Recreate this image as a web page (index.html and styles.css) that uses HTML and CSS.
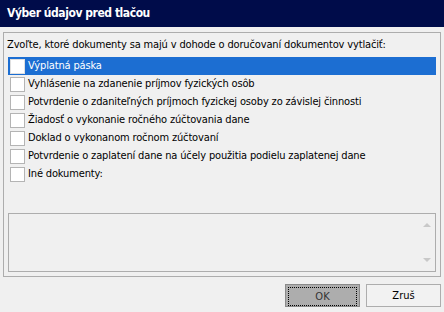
FILE: index.html
```html
<!doctype html>
<html>

<head>
   <meta charset="utf-8">
   <title>Výber údajov pred tlačou</title>
   <link rel="stylesheet" href="styles.css">
</head>

<body>
   <div class="titleBar">Výber údajov pred tlačou</div>

   <div class="panel">
      <div class="prompt">Zvoľte, ktoré dokumenty sa majú v dohode o doručovaní dokumentov vytlačiť:</div>
      <div class="list">
         <div class="row selected"><span class="box"></span>Výplatná páska</div>
         <div class="row"><span class="box"></span>Vyhlásenie na zdanenie príjmov fyzických osôb</div>
         <div class="row"><span class="box"></span>Potvrdenie o zdaniteľných príjmoch fyzickej osoby zo závislej činnosti</div>
         <div class="row"><span class="box"></span>Žiadosť o vykonanie ročného zúčtovania dane</div>
         <div class="row"><span class="box"></span>Doklad o vykonanom ročnom zúčtovaní</div>
         <div class="row"><span class="box"></span>Potvrdenie o zaplatení dane na účely použitia podielu zaplatenej dane</div>
         <div class="row"><span class="box"></span>Iné dokumenty:</div>
      </div>
      <div class="memo">
         <div class="scroll">
            <span class="arrow up"></span>
            <span class="arrow down"></span>
         </div>
      </div>
   </div>

   <div class="buttons">
      <button class="btn default"><span>OK</span></button>
      <button class="btn">Zruš</button>
   </div>
</body>

</html>
```
FILE: styles.css
```css
html,
body {
   margin: 0;
   padding: 0;
   background: #f0f0f0;
   font-family: "DejaVu Sans", sans-serif;
   font-stretch: condensed;
   font-size: 11px;
   letter-spacing: -0.15px;
   color: #000;
}

.titleBar {
   height: 27px;
   box-sizing: border-box;
   background: #000c4a;
   color: #fff;
   font-weight: bold;
   font-size: 12px;
   letter-spacing: -0.45px;
   line-height: 27px;
   padding-left: 7px;
}

.panel {
   margin: 5px 3px 0 3px;
   border: 1px solid #adadad;
   padding: 4px 4px 4px 4px;
   height: 245px;
   box-sizing: border-box;
   display: flex;
   flex-direction: column;
}

.prompt {
   line-height: 16px;
   margin-bottom: 4px;
   margin-left: -1px;
}

.list {
   display: flex;
   flex-direction: column;
}

.row {
   height: 18px;
   line-height: 18px;
   display: flex;
   align-items: center;
   gap: 3px;
   white-space: nowrap;
}

.row .box {
   width: 15px;
   height: 15px;
   box-sizing: border-box;
   margin-left: 2px;
   background: #fff;
   border: 1px solid #b4b4b4;
}

.row.selected {
   background: #1c6ed2;
   color: #fff;
}

.row.selected .box {
   border-color: #e0e0e0;
}

.memo {
   margin-top: 30px;
   height: 59px;
   border: 1px solid #adadad;
   box-sizing: border-box;
   display: flex;
   justify-content: flex-end;
}

.memo .scroll {
   width: 17px;
   display: flex;
   flex-direction: column;
   justify-content: space-between;
   align-items: center;
   padding: 9px 0 9px 0;
}

.arrow {
   width: 0;
   height: 0;
   border-left: 4px solid transparent;
   border-right: 4px solid transparent;
}

.arrow.up {
   border-bottom: 4px solid #c8c8c8;
}

.arrow.down {
   border-top: 4px solid #c8c8c8;
}

.buttons {
   display: flex;
   justify-content: flex-end;
   gap: 6px;
   margin: 7px 3px 0 0;
}

.btn {
   width: 75px;
   height: 23px;
   box-sizing: border-box;
   border: 1px solid #adadad;
   background: #f2f2f2;
   font-family: "DejaVu Sans", sans-serif;
   font-stretch: condensed;
   font-size: 11px;
   color: #000;
   padding: 0;
}

.btn.default {
   background: #adadad;
   border-color: #8a8a8a;
   padding: 2px;
}

.btn.default span {
   display: block;
   height: 100%;
   line-height: 17px;
   border: 1px dotted #000;
   color: #333;
}
```
